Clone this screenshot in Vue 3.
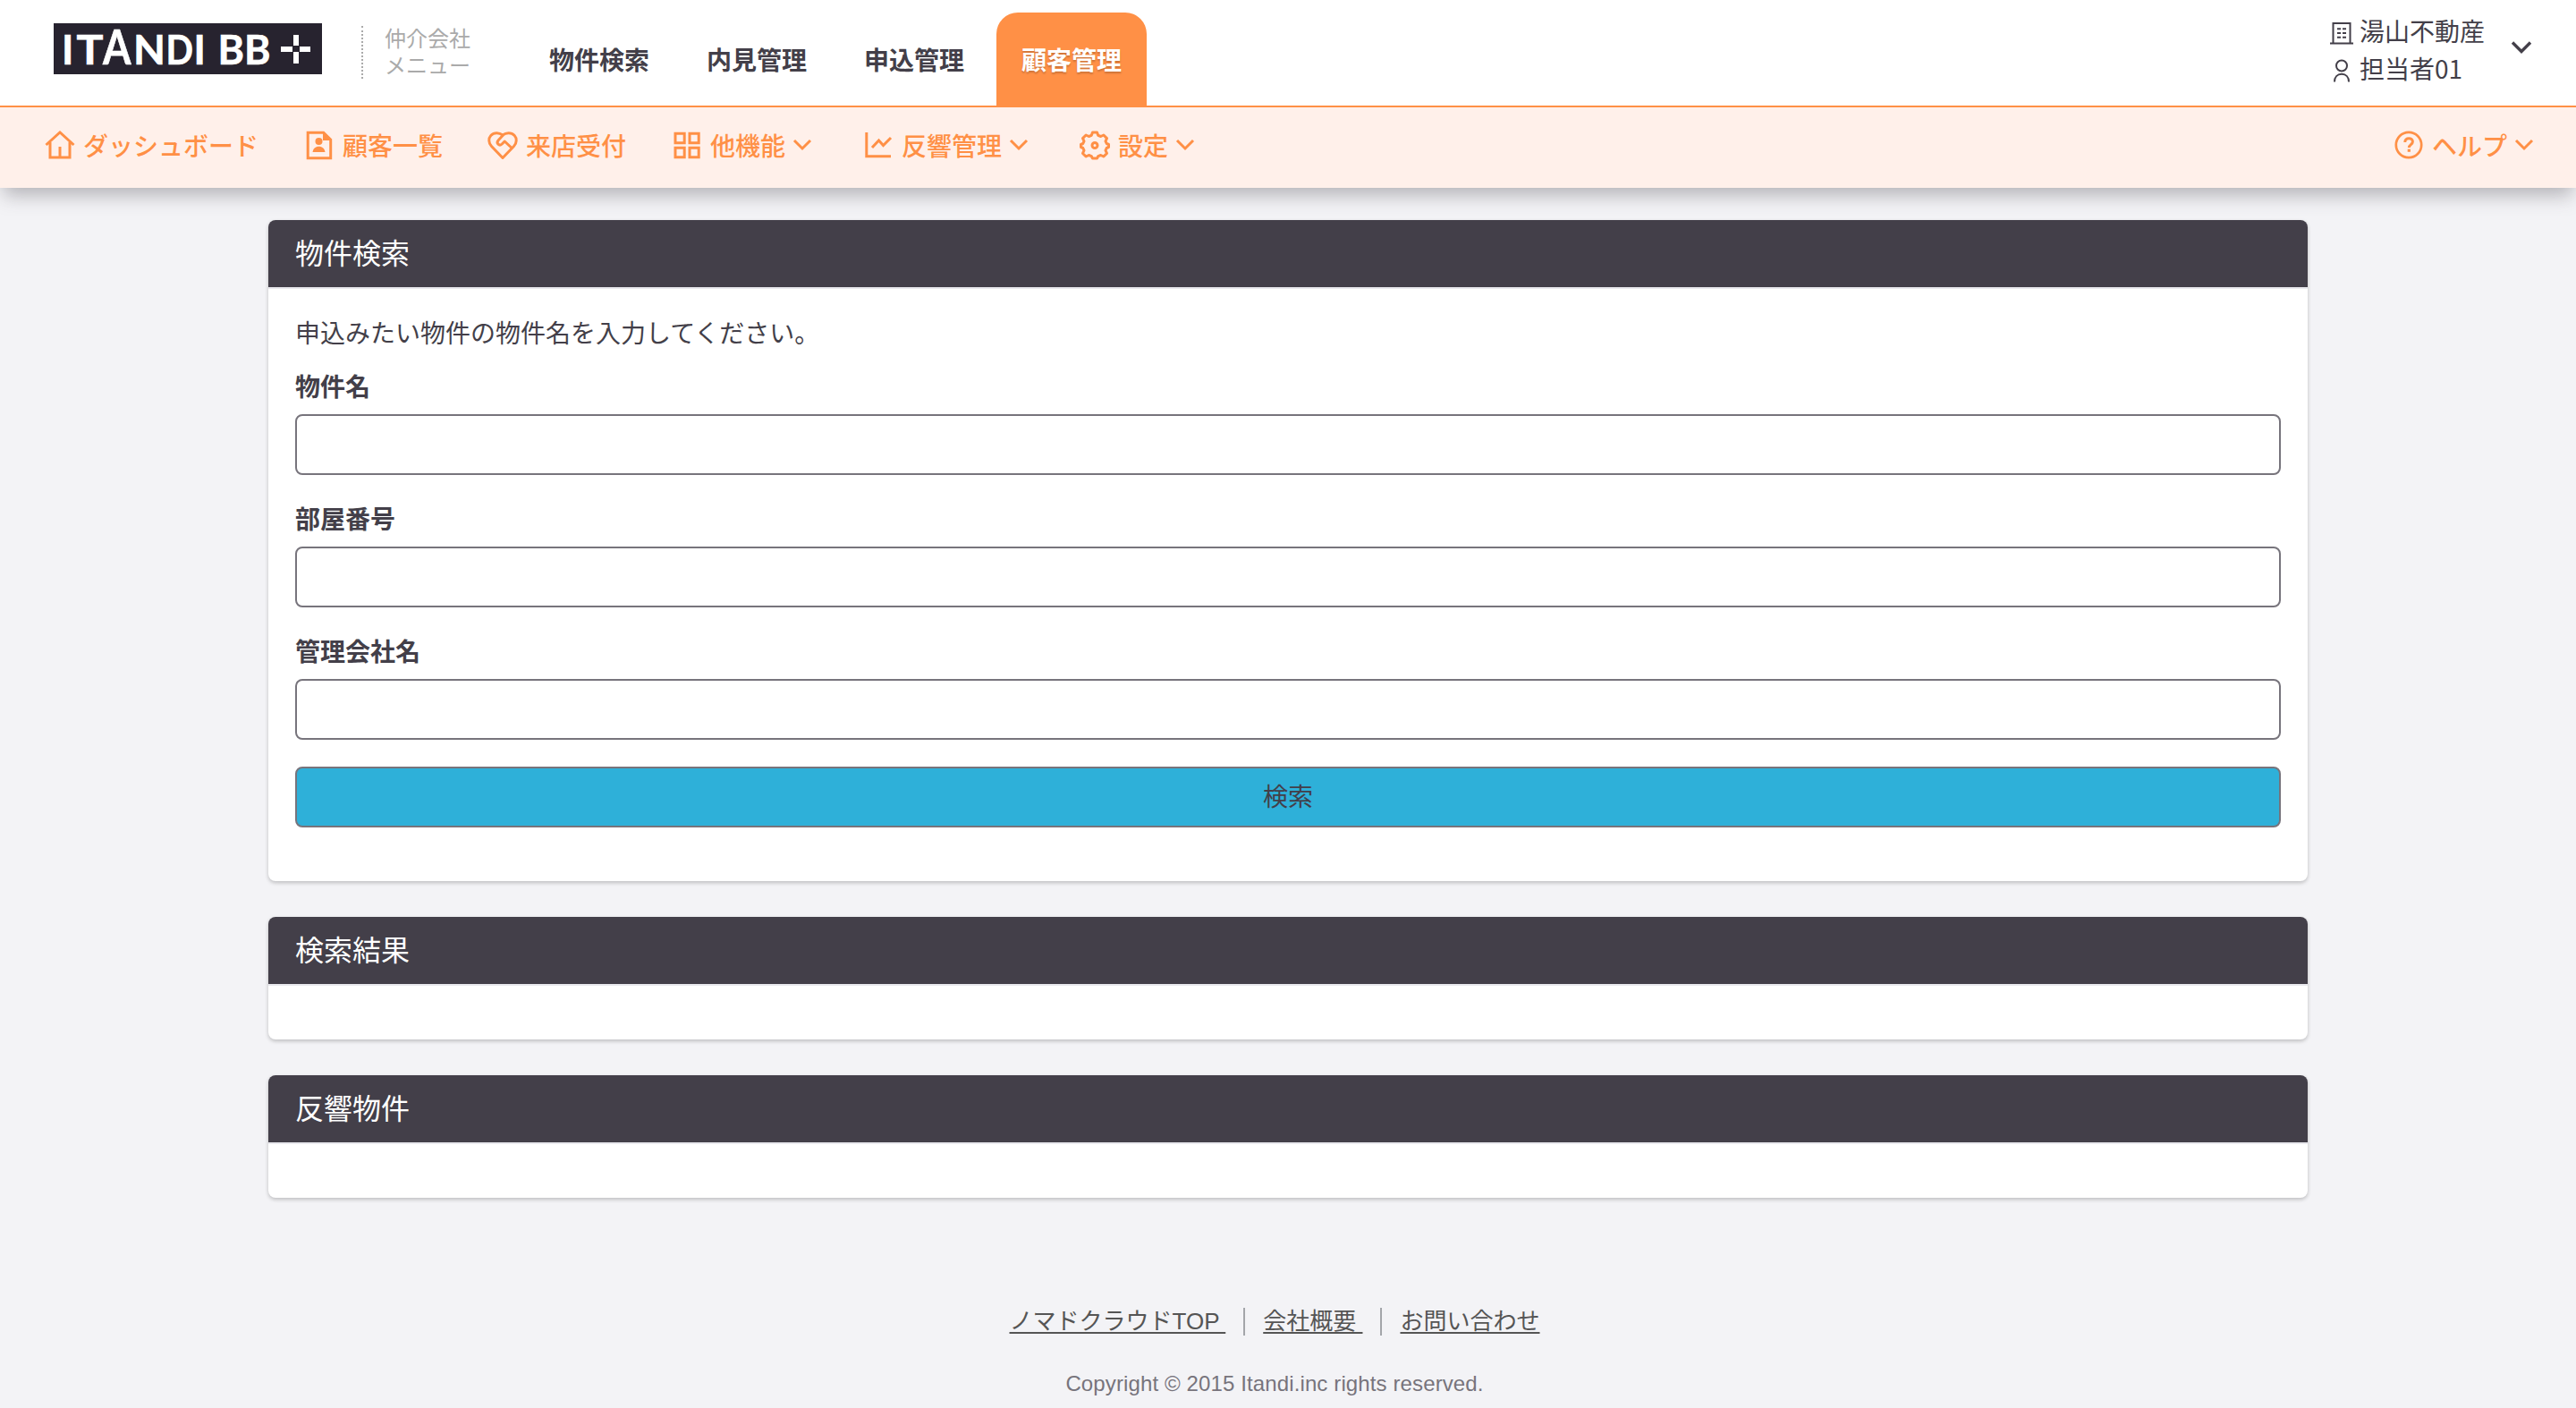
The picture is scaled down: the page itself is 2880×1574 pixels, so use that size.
<template>
  <div class="page">
    <header class="header">
      <div class="header-top">
        <a class="logo" href="#">
          <svg width="300" height="57" viewBox="0 0 300 57" fill="#fff">
            <rect width="300" height="57" fill="#27232f" />
            <text class="logo-text" y="46" x="9">I</text>
            <text class="logo-text" y="46" x="25.500" textLength="30" lengthAdjust="spacingAndGlyphs">T</text>
            <text class="logo-text logo-a" y="46" x="55" textLength="31.500" lengthAdjust="spacingAndGlyphs">A</text>
            <text class="logo-text" y="46" x="89" textLength="36" lengthAdjust="spacingAndGlyphs">N</text>
            <text class="logo-text" y="46" x="125.500" textLength="30.500" lengthAdjust="spacingAndGlyphs">D</text>
            <text class="logo-text" y="46" x="156.500">I</text>
            <text class="logo-text" y="46" x="183.500" textLength="59" lengthAdjust="spacingAndGlyphs">BB</text>
            <path d="M268 13h6v12h-6zM268 32h6v13h-6zM254 26h13v6h-13zM275 26h12v6h-12z" />
          </svg>
        </a>
        <div class="menu-name">仲介会社<br />メニュー</div>
        <nav class="main-nav">
          <a
            v-for="item in mainNav"
            :key="item.label"
            href="#"
            class="main-nav-item"
            :class="{ active: item.active }"
          >{{ item.label }}</a>
        </nav>
        <div class="account">
          <div class="account-info">
            <div class="account-row">
              <svg class="account-icon" viewBox="0 0 26 26" fill="none" stroke="#433f49" stroke-width="2">
                <path d="M3.500 24V2h19v22M0 24.500h26" />
                <path d="M8 8.300h4M14 8.300h4M8 13h4M14 13h4M8 17.800h4M14 17.800h4" />
              </svg>
              <span>湯山不動産</span>
            </div>
            <div class="account-row">
              <svg class="account-icon" viewBox="0 0 26 26" fill="none" stroke="#433f49" stroke-width="2">
                <circle cx="13" cy="7.500" r="6" />
                <path d="M5 25.500c0-5.500 3.200-8.700 8-8.700s8 3.200 8 8.700" />
              </svg>
              <span>担当者01</span>
            </div>
          </div>
          <svg class="account-arrow" viewBox="0 0 24 16" fill="none" stroke="#433f49" stroke-width="3.400">
            <path d="M2 2.500l10 10 10-10" />
          </svg>
        </div>
      </div>

      <nav class="sub-nav">
        <a v-for="item in subNav" :key="item.label" href="#" class="sub-nav-item" :class="item.icon">
          <svg class="sub-icon" viewBox="0 0 34 34" fill="none" stroke="currentColor" stroke-width="3">
            <template v-if="item.icon === 'home'">
              <path d="M1.500 17L17 3l15.500 14M6 14v17h22V14M17 31V19" />
            </template>
            <template v-else-if="item.icon === 'customer'">
              <path d="M4.200 3.200h17.500l8 8v20.500H4.200z" />
              <path d="M21 2l10 10H21z" fill="currentColor" stroke="none" />
              <circle cx="16.500" cy="13" r="4" fill="currentColor" stroke="none" />
              <path d="M9.500 25c.5-4 3.200-6.300 7-6.300s6.500 2.300 7 6.300z" fill="currentColor" stroke="none" />
            </template>
            <template v-else-if="item.icon === 'heart'">
              <path
                d="M17 31.500L4.500 18.500C1 15 1 9.500 3.800 6.500 7.500 2.700 13 3 17 6 21 3 26.500 2.700 30.200 6.500 33 9.500 33 15 29.500 18.500z"
                stroke-linejoin="round"
              />
              <path d="M17.500 6l-5.300 5.700c-3 3.500 1 7 4 4.300l3-3 8 7.500" stroke-linejoin="round" />
            </template>
            <template v-else-if="item.icon === 'grid'">
              <path d="M4 4.300h10.200v10.400H4zM20 4.300h10.200v10.400H20zM4 20.300h10.200v10.400H4zM20 20.300h10.200v10.400H20z" />
            </template>
            <template v-else-if="item.icon === 'chart'">
              <path d="M3.800 3v26.700H31M10 20l7.500-8 5 5.500L31 9" />
            </template>
            <template v-else-if="item.icon === 'gear'">
              <path
                d="M14.500 3h5l1.200 3.300 3 1.200 3.200-1.500 3.600 3.600-1.500 3.200 1.200 2.700 2.300 1v3l-2.300 1-1.200 2.700 1.500 3.200-3.600 3.600-3.200-1.500-3 1.200-1.200 2.300h-5l-1.200-2.300-3-1.200-3.200 1.500-3.600-3.600 1.500-3.200L3.800 20.500l-2.300-1v-3l2.300-1L5 12.800 3.500 9.600 7.100 6l3.200 1.500 3-1.200z"
                stroke-linejoin="round"
              />
              <circle cx="17" cy="17.500" r="3" />
            </template>
            <template v-else>
              <circle cx="17" cy="17" r="14.200" stroke-width="2.700" />
              <path d="M12.800 14c0-2.900 1.800-4.300 4.300-4.300s4.300 1.500 4.300 3.800c0 3-4.100 3.200-4.100 6.500" />
              <path d="M15.700 21.700h3.200v3.100h-3.200z" fill="currentColor" stroke="none" />
            </template>
          </svg>
          <span>{{ item.label }}</span>
          <svg v-if="item.arrow" class="sub-arrow" viewBox="0 0 24 16" fill="none" stroke="currentColor" stroke-width="3">
            <path d="M3 3l9 9 9-9" />
          </svg>
        </a>
      </nav>
    </header>

    <main class="content">
      <section class="card">
        <h2 class="card-title">物件検索</h2>
        <form class="card-body search-form" @submit.prevent>
          <p class="lead">申込みたい物件の物件名を入力してください。</p>
          <div v-for="field in fields" :key="field.key" class="field">
            <label :for="field.key">{{ field.label }}</label>
            <input :id="field.key" v-model="form[field.key]" type="text" />
          </div>
          <button type="submit" class="search-btn">検索</button>
        </form>
      </section>

      <section class="card">
        <h2 class="card-title">検索結果</h2>
        <div class="card-body"></div>
      </section>

      <section class="card">
        <h2 class="card-title">反響物件</h2>
        <div class="card-body"></div>
      </section>
    </main>

    <footer class="footer">
      <ul class="footer-links">
        <li v-for="link in footerLinks" :key="link"><a href="#">{{ link }}</a></li>
      </ul>
      <p class="copyright">Copyright © 2015 Itandi.inc rights reserved.</p>
    </footer>
  </div>
</template>

<script setup>
import { reactive } from 'vue'

const mainNav = [
  { label: '物件検索' },
  { label: '内見管理' },
  { label: '申込管理' },
  { label: '顧客管理', active: true },
]

const subNav = [
  { label: 'ダッシュボード', icon: 'home' },
  { label: '顧客一覧', icon: 'customer' },
  { label: '来店受付', icon: 'heart' },
  { label: '他機能', icon: 'grid', arrow: true },
  { label: '反響管理', icon: 'chart', arrow: true },
  { label: '設定', icon: 'gear', arrow: true },
  { label: 'ヘルプ', icon: 'help', arrow: true },
]

const fields = [
  { key: 'building', label: '物件名' },
  { key: 'room', label: '部屋番号' },
  { key: 'company', label: '管理会社名' },
]

const footerLinks = ['ノマドクラウドTOP ', '会社概要 ', 'お問い合わせ']

const form = reactive({ building: '', room: '', company: '' })
</script>

<style>
body {
  background: #f3f3f6;
}
</style>

<style scoped>
.page {
  height: 1574px;
  overflow: hidden;
  background: #f3f3f6;
  color: #433f49;
  font-family: "Noto Sans CJK JP", sans-serif;
  font-size: 28px;
}
.page * {
  box-sizing: border-box;
}
a {
  color: inherit;
  text-decoration: none;
}

.header {
  position: relative;
  box-shadow: 0 12px 20px -4px rgba(67, 63, 73, 0.36);
}
.header-top {
  display: flex;
  height: 120px;
  padding-left: 60px;
  background: #fff;
  border-bottom: 2px solid #ff9046;
}
.logo {
  height: 57px;
  margin-top: 26px;
}
.logo svg {
  display: block;
  overflow: visible;
}
.logo-text {
  font-family: Lato, sans-serif;
  font-size: 45px;
  font-weight: 700;
  stroke: #fff;
  stroke-width: 0.6px;
}
.logo-a {
  font-size: 53px;
}
.menu-name {
  height: 59px;
  margin: 29px 0 0 44px;
  padding-left: 24px;
  border-left: 2px dotted #aaa;
  color: #aaa;
  font-size: 24px;
  line-height: 30px;
}
.menu-name::before {
  content: "";
  display: block;
  margin-top: -2px;
}
.main-nav {
  display: flex;
  align-items: flex-end;
  gap: 8px;
  margin-left: 60px;
}
.main-nav-item {
  width: 168px;
  height: 104px;
  border-radius: 24px 24px 0 0;
  font-weight: 700;
  line-height: 105px;
  text-align: center;
}
.main-nav-item.active {
  background: #ff9046;
  color: #fff;
  text-shadow: 0 2px 2px rgba(0, 0, 0, 0.2);
}
.account {
  display: flex;
  align-items: flex-start;
  margin-left: auto;
  padding-right: 49px;
}
.account-info {
  margin-top: 13px;
}
.account-row {
  display: flex;
  align-items: center;
  gap: 7px;
  height: 42px;
  line-height: 42px;
}
.account-icon {
  width: 26px;
  height: 26px;
  margin-top: 6px;
}
.account-arrow {
  width: 24px;
  height: 16px;
  margin: 45px 0 0 29px;
}

.sub-nav {
  display: flex;
  gap: 52px;
  height: 90px;
  padding: 21px 41px 0 51px;
  background: #fff0ea;
  color: #ff9046;
  font-weight: 500;
}
.sub-nav-item {
  display: flex;
  align-items: center;
  height: 42px;
  line-height: 42px;
}
.sub-icon {
  width: 34px;
  height: 34px;
  margin: 0 9px 0 -1px;
}
.sub-arrow {
  width: 24px;
  height: 16px;
  margin: 0 5px 0 7px;
}
.sub-nav-item.heart {
  margin-left: -1px;
}
.sub-nav-item.help {
  margin-left: auto;
}

.content {
  display: flex;
  flex-direction: column;
  gap: 40px;
  width: 2280px;
  margin: 36px auto 0;
}
.card {
  background: #fff;
  border-radius: 8px;
  box-shadow: 0 2px 4px rgba(0, 0, 0, 0.22);
}
.card-title {
  height: 77px;
  margin: 0;
  padding-left: 30px;
  background: #433f49;
  background-clip: padding-box;
  border-bottom: 2px solid #e9e9ee;
  border-radius: 8px 8px 0 0;
  color: #fff;
  font-size: 32px;
  font-weight: 400;
  line-height: 71px;
}
.card-body {
  padding: 30px;
}
.search-form {
  padding: 28px 30px 60px;
}
.lead {
  margin: 0;
  line-height: 40px;
}
.field {
  margin-bottom: 28px;
}
.field label {
  display: block;
  margin-bottom: 12px;
  font-weight: 700;
  line-height: 40px;
}
.lead + .field {
  margin-top: 20px;
}
.field input,
.search-btn {
  display: block;
  width: 100%;
  height: 68px;
  padding: 0 20px;
  border: 2px solid #77747c;
  border-radius: 8px;
  background: #fff;
  color: inherit;
  font: inherit;
}
.search-btn {
  margin-top: 30px;
  padding-bottom: 4px;
  background: #2eb0d9;
  line-height: 60px;
}

.footer {
  margin-top: 123px;
  padding-right: 30px;
  color: #77747c;
  font-family: "Liberation Sans", "Noto Sans CJK JP", sans-serif;
  text-align: center;
}
.footer-links {
  display: flex;
  justify-content: center;
  margin: 0;
  padding: 0;
  list-style: none;
  color: #555;
  font-size: 26px;
  line-height: 31px;
}
.footer-links li {
  height: 31px;
  padding: 0 20px;
  white-space: pre;
}
.footer-links li + li {
  border-left: 2px solid #a3a5a9;
}
.footer-links a {
  text-decoration: underline;
  text-decoration-thickness: 2px;
  text-underline-offset: 3px;
}
.copyright {
  margin: 38px 0 0;
  font-size: 24px;
  letter-spacing: 0.12px;
  line-height: 32px;
}
</style>
